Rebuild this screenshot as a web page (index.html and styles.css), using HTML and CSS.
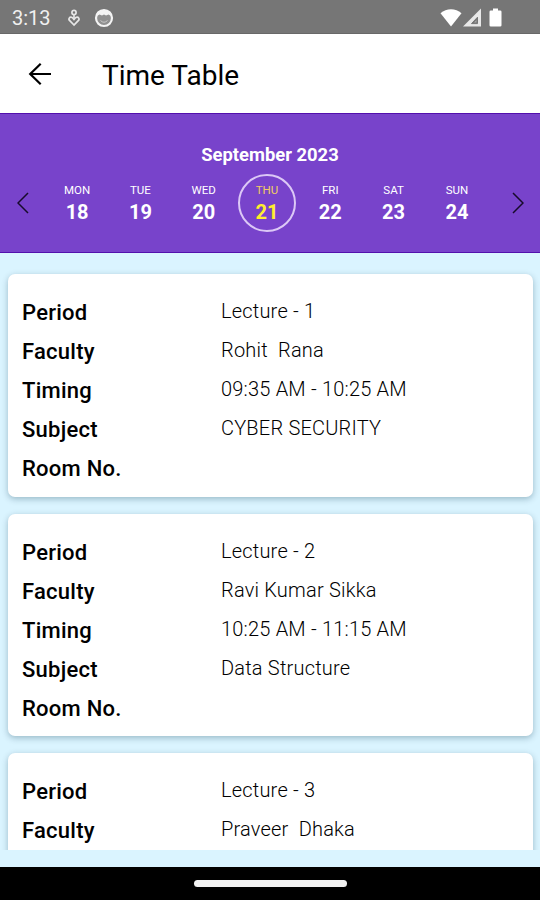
FILE: index.html
```html
<!DOCTYPE html>
<html lang="en">
<head>
  <meta charset="UTF-8">
  <title>Time Table</title>
  <link rel="stylesheet" href="styles.css">
</head>
<body>
  <div class="status-bar">
    <span class="clock">3:13</span>
    <svg class="status-care" width="12" height="18" viewBox="0 0 12 18" fill="none" stroke="#e6e6e6" stroke-width="1.7">
      <circle cx="6" cy="3.4" r="2.1"/>
      <path d="M6 16L1.3 11.2C.4 9.8 1.5 8 3.2 8.2C4.6 8.3 5.2 9.3 6 10.4C6.8 9.3 7.4 8.3 8.8 8.2C10.5 8 11.6 9.8 10.7 11.2Z"/>
      <path d="M6 5.500V9"/>
    </svg>
    <svg class="status-face" width="20" height="20" viewBox="0 0 20 20">
      <circle cx="10" cy="10" r="8" fill="#909090" stroke="#f4f4f4" stroke-width="2.2"/>
      <path d="M3 8C3 3.5 6.5 2 10 2S17 3.5 17 8L14.5 6.5L12 7.5L10 6.5L8 7.5L5.5 6.5Z" fill="#f4f4f4"/>
      <path d="M6.5 12.5Q10 16 13.500 12.500" fill="none" stroke="#c8c8c8"/>
    </svg>
    <svg class="status-wifi" width="22" height="20" viewBox="0 0 22 20">
      <path d="M.5 5.200C6.500-.2 15.500-.2 21.500 5.200L11 18.500Z" fill="#fff"/>
    </svg>
    <svg class="status-signal" width="18" height="20" viewBox="0 0 18 20">
      <path d="M0 18.600L18 .6V18.600Z" fill="#e8e8e8"/>
      <path d="M8.500 15.600L14.500 9.200V15.600Z" fill="#767676" stroke="#767676"/>
      <path d="M11 14.500L13.500 12V14.500Z" fill="#a8a8a8"/>
    </svg>
    <svg class="status-battery" width="13" height="20" viewBox="0 0 13 20">
      <path d="M4 .5H9V2.500H11.200Q12.500 2.500 12.500 3.800V17.300Q12.500 18.600 11.200 18.600H1.800Q.5 18.600 .5 17.300V3.800Q.5 2.500 1.800 2.500H4Z" fill="#fff"/>
    </svg>
  </div>

  <header class="app-bar">
    <svg class="back" width="24" height="24" viewBox="0 0 24 24" fill="none" stroke="#000" stroke-width="2.2">
      <path d="M23 12H2M12.700 1.700L2.200 12L12.700 22.300"/>
    </svg>
    <h1>Time Table</h1>
  </header>

  <section class="calendar">
    <h2>September 2023</h2>
    <div class="week">
      <svg class="arrow" width="12" height="22" viewBox="0 0 12 22" fill="none" stroke="#170b2b" stroke-width="1.500">
        <path d="M11 1L1 11L11 21"/>
      </svg>
      <div class="days">
        <div class="day"><span>MON</span><b>18</b></div>
        <div class="day"><span>TUE</span><b>19</b></div>
        <div class="day"><span>WED</span><b>20</b></div>
        <div class="day selected"><span>THU</span><b>21</b></div>
        <div class="day"><span>FRI</span><b>22</b></div>
        <div class="day"><span>SAT</span><b>23</b></div>
        <div class="day"><span>SUN</span><b>24</b></div>
      </div>
      <svg class="arrow" width="12" height="22" viewBox="0 0 12 22" fill="none" stroke="#170b2b" stroke-width="1.500">
        <path d="M1 1L11 11L1 21"/>
      </svg>
    </div>
  </section>

  <main class="lectures">
    <dl class="card">
      <dt>Period</dt><dd>Lecture - 1</dd>
      <dt>Faculty</dt><dd>Rohit  Rana</dd>
      <dt>Timing</dt><dd>09:35 AM - 10:25 AM</dd>
      <dt>Subject</dt><dd>CYBER SECURITY</dd>
      <dt>Room No.</dt><dd></dd>
    </dl>
    <dl class="card">
      <dt>Period</dt><dd>Lecture - 2</dd>
      <dt>Faculty</dt><dd>Ravi Kumar Sikka</dd>
      <dt>Timing</dt><dd>10:25 AM - 11:15 AM</dd>
      <dt>Subject</dt><dd>Data Structure</dd>
      <dt>Room No.</dt><dd></dd>
    </dl>
    <dl class="card">
      <dt>Period</dt><dd>Lecture - 3</dd>
      <dt>Faculty</dt><dd>Praveer  Dhaka</dd>
    </dl>
  </main>

  <div class="nav-bar"><div class="handle"></div></div>
</body>
</html>
```
FILE: styles.css
```css
* {
  box-sizing: border-box;
}
body {
  margin: 0;
  height: 900px;
  display: flex;
  flex-direction: column;
  overflow: hidden;
  font-family: Roboto, sans-serif;
  background: #daf4ff;
  color: #000;
}
h1, h2, dl, dd {
  margin: 0;
}
.status-bar {
  height: 34px;
  flex: none;
  display: flex;
  align-items: center;
  padding: 2px 38px 0 12px;
  background: #767676;
  border-bottom: 1px solid #686868;
}
.clock {
  width: 56px;
  padding-top: 1px;
  font-size: 20px;
  color: #f0f0f0;
}
.status-face {
  margin-left: 14px;
}
.status-wifi {
  margin-left: auto;
}
.status-signal {
  margin-left: 1px;
}
.status-battery {
  margin-left: 8px;
}
.app-bar {
  height: 79px;
  flex: none;
  display: flex;
  align-items: center;
  padding: 1px 0 0 28px;
  background: #fff;
}
.app-bar h1 {
  margin-left: 50px;
  padding-top: 3px;
  font-size: 28px;
  font-weight: 400;
}
.calendar {
  height: 140px;
  flex: none;
  padding-top: 31px;
  background: #7843cb;
  border-top: 1px solid #5310ad;
  border-bottom: 1px solid #5310ad;
  color: #fff;
}
.calendar h2 {
  font-size: 18.4px;
  line-height: 20px;
  font-weight: 700;
  text-align: center;
}
.week {
  display: flex;
  align-items: center;
  justify-content: space-between;
  padding: 9px 16px 0 17px;
}
.days {
  display: flex;
  gap: 5.3px;
  margin-right: 7px;
}
.day {
  width: 58px;
  height: 58px;
  display: flex;
  flex-direction: column;
  align-items: center;
  padding-top: 8px;
  border: 2px solid transparent;
  border-radius: 50%;
}
.day span {
  font-size: 11.5px;
  line-height: 13px;
}
.day b {
  margin-top: 3px;
  font-size: 20px;
  line-height: 24px;
}
.day.selected {
  border-color: #dcc8f6;
  color: #ffee2e;
}
.day.selected span {
  color: #f0cc62;
}
.lectures {
  height: 597px;
  flex: none;
  overflow: hidden;
  padding: 21px 7px 0 8px;
}
.card {
  height: 222.5px;
  margin-bottom: 17px;
  padding: 19px 14px;
  display: grid;
  grid-template-columns: 199px 1fr;
  grid-auto-rows: 39px;
  align-content: start;
  background: #fff;
  border-radius: 7px;
  box-shadow: 0 2px 6px rgba(0, 50, 70, 0.3);
}
.card dt {
  font-size: 22px;
  line-height: 40px;
  font-weight: 500;
  letter-spacing: 0.25px;
}
.card dd {
  font-size: 20px;
  line-height: 37px;
  font-weight: 300;
  letter-spacing: 0.2px;
  white-space: pre;
}
.nav-bar {
  height: 33px;
  flex: none;
  margin-top: auto;
  display: flex;
  justify-content: center;
  padding-top: 13px;
  background: #000;
}
.handle {
  width: 153px;
  height: 7px;
  border-radius: 4px;
  background: #f2f2f2;
}
```
